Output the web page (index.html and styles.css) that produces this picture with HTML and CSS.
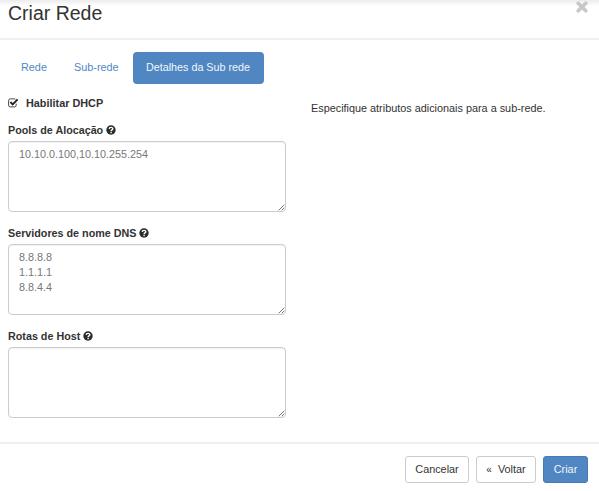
FILE: index.html
```html
<!DOCTYPE html>
<html lang="pt-BR">
<head>
<meta charset="utf-8">
<title>Criar Rede</title>
<link rel="stylesheet" href="styles.css">
</head>
<body>
<svg class="defs" width="0" height="0" aria-hidden="true">
  <symbol id="help" viewBox="0 0 10 10">
    <circle cx="5" cy="5" r="4.7" fill="#2b2b2b"/>
    <path d="M3.2 3.9C3.3 2 6.8 1.9 6.8 3.8C6.8 5 5.1 4.8 5.1 6.2" fill="none" stroke="#fff" stroke-width="1.4"/>
    <rect x="4.4" y="6.9" width="1.4" height="1.3" fill="#fff"/>
  </symbol>
  <symbol id="grip" viewBox="0 0 7 7">
    <path d="M.7 6.3L6.3 .7M3.7 6.3L6.3 3.7" fill="none" stroke="#777" stroke-width="1"/>
  </symbol>
</svg>
<div class="modal">
  <header class="header">
    <h1 class="title">Criar Rede</h1>
    <button class="close" aria-label="Fechar"><svg width="12" height="12" viewBox="0 0 12 12"><path d="M2.2 2.2L9.8 9.8M9.8 2.2L2.2 9.8" stroke="#c8c8c8" stroke-width="3.7" stroke-linecap="round"/></svg></button>
  </header>
  <main class="body">
    <nav class="tabs">
      <a class="tab tab-rede">Rede</a>
      <a class="tab tab-sub">Sub-rede</a>
      <a class="tab active">Detalhes da Sub rede</a>
    </nav>
    <div class="columns">
      <form class="form">
        <label class="check">
          <svg width="11" height="10" viewBox="0 0 11 10"><path d="M8.2 5.6V7.2Q8.2 8.9 6.5 8.9H2.3Q.6 8.9 .6 7.2V2.6Q.6 .9 2.3 .9H6.5Q7.1 .9 7.5 1.1" fill="none" stroke="#333" stroke-width=".9"/><path d="M2.4 4L4.7 6.3L9.6 1.4" fill="none" stroke="#222" stroke-width="1.9"/></svg>
          <span>Habilitar DHCP</span>
        </label>
        <div class="group">
          <label class="label" for="pools">Pools de Alocação <svg width="10" height="10"><use href="#help"/></svg></label>
          <div class="field"><textarea id="pools">10.10.0.100,10.10.255.254</textarea><svg class="grip" width="7" height="7"><use href="#grip"/></svg></div>
        </div>
        <div class="group">
          <label class="label" for="dns">Servidores de nome DNS <svg width="10" height="10"><use href="#help"/></svg></label>
          <div class="field"><textarea id="dns">8.8.8.8
1.1.1.1
8.8.4.4</textarea><svg class="grip" width="7" height="7"><use href="#grip"/></svg></div>
        </div>
        <div class="group">
          <label class="label" for="rotas">Rotas de Host <svg width="10" height="10"><use href="#help"/></svg></label>
          <div class="field"><textarea id="rotas"></textarea><svg class="grip" width="7" height="7"><use href="#grip"/></svg></div>
        </div>
      </form>
      <p class="help">Especifique atributos adicionais para a sub-rede.</p>
    </div>
  </main>
  <footer class="footer">
    <button class="btn cancel">Cancelar</button>
    <button class="btn back"><span class="laquo">«</span>Voltar</button>
    <button class="btn primary">Criar</button>
  </footer>
</div>
</body>
</html>
```
FILE: styles.css
```css
* { box-sizing: border-box; }
body {
  margin: 0;
  background: #fff;
  color: #333;
  font: 10.85px/15px "Liberation Sans", Arial, sans-serif;
  overflow: hidden;
}
.defs { display: block; }
.modal { width: 599px; height: 491px; display: flex; flex-direction: column; }
.header {
  height: 40px;
  display: flex;
  justify-content: space-between;
  align-items: flex-start;
  padding: 0 11px 0 8px;
  border-bottom: 2px solid #f0f0f0;
  background: linear-gradient(#ececec, #fff 6px);
}
.title { margin: 1px 0 0; font-size: 19.5px; line-height: 24px; font-weight: 400; }
.close { margin: 1px 0 0; padding: 0; border: 0; background: none; line-height: 0; }
.body { height: 402px; padding: 12px 8px 0; }
.tabs { display: flex; height: 32px; }
.tab {
  padding: 8px 13px;
  border-radius: 4px;
  color: #5088c4;
  white-space: nowrap;
}
.tab-rede { width: 53px; }
.tab-sub { width: 70px; margin-right: 2px; }
.active { width: 131px; background: #5087c3; color: #f2f6fb; font-size: 10.75px; }
.columns { display: flex; }
.form { width: 278px; padding-top: 12px; }
.check { display: flex; align-items: center; gap: 7px; height: 15px; font-weight: 700; }
.check svg { margin-top: -2px; }
.group { height: 103px; padding-top: 12px; }
.label {
  display: flex;
  align-items: center;
  gap: 3px;
  height: 15px;
  font-size: 10.75px;
  font-weight: 700;
  white-space: nowrap;
}
.label svg { margin-top: -1px; }
.field { position: relative; height: 71px; margin-top: 3px; }
textarea {
  display: block;
  width: 278px;
  height: 71px;
  padding: 5px 10px;
  border: 1px solid #ccc;
  border-radius: 4px;
  background: #fff;
  box-shadow: inset 0 1px 1px rgba(0, 0, 0, .06);
  color: #777;
  font: inherit;
  font-size: 10.8px;
  resize: none;
  overflow: hidden;
}
.grip { position: absolute; right: 1px; bottom: 1px; }
.help { margin: 17px 0 0 25px; white-space: nowrap; }
.footer {
  flex: 1;
  display: flex;
  align-items: flex-start;
  justify-content: flex-end;
  gap: 7px;
  padding: 12px 11px 0 0;
  border-top: 2px solid #f0f0f0;
}
.btn {
  height: 27px;
  padding: 0;
  border: 1px solid #ccc;
  border-radius: 3px;
  background: #fff;
  color: #333;
  font: inherit;
}
.cancel { width: 64px; }
.back { width: 60px; }
.laquo { margin-right: 6px; font-size: 10px; }
.primary { width: 45px; border-color: #467bb7; background: #5087c3; color: #f2f6fb; }
```
